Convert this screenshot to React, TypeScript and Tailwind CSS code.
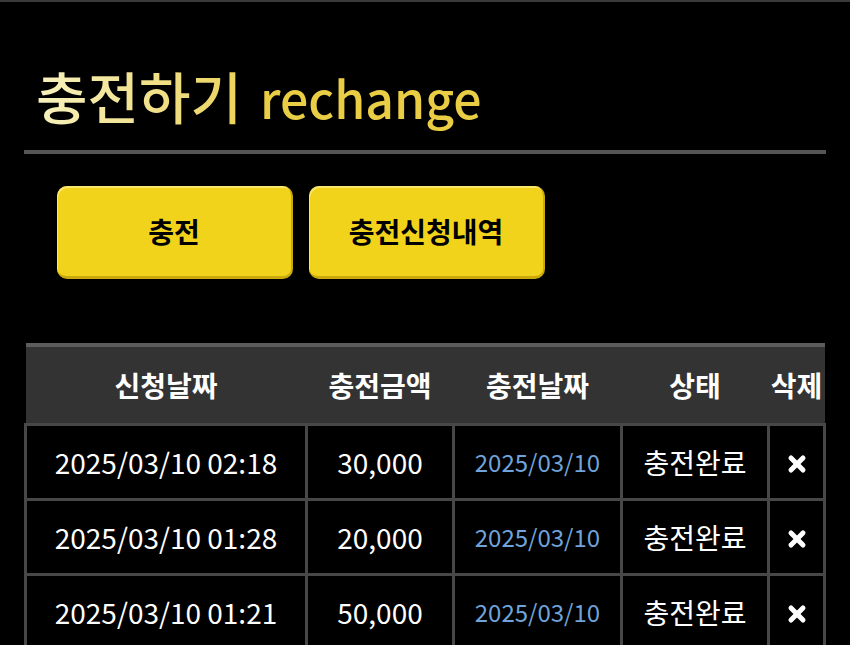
import { X } from "lucide-react";

type ChargeRow = {
  requestedAt: string;
  amount: string;
  chargedOn: string;
  status: string;
};

const rows: ChargeRow[] = [
  { requestedAt: "2025/03/10 02:18", amount: "30,000", chargedOn: "2025/03/10", status: "충전완료" },
  { requestedAt: "2025/03/10 01:28", amount: "20,000", chargedOn: "2025/03/10", status: "충전완료" },
  { requestedAt: "2025/03/10 01:21", amount: "50,000", chargedOn: "2025/03/10", status: "충전완료" },
];

const font = { fontFamily: '"Noto Sans CJK KR", "Noto Sans", sans-serif' };

function YellowButton({ label }: { label: string }) {
  return (
    <button className="flex h-[93px] w-[236px] items-center justify-center rounded-[10px] border-b-[3px] border-r-[2px] border-[#c9a90c] bg-[#f1d31c] text-[28px] font-bold text-black shadow-[inset_1px_2px_0_rgba(255,240,140,0.7),0_2px_3px_rgba(0,0,0,0.6)]">
      {label}
    </button>
  );
}

const cell = "border-[3px] border-[#474747] text-center";

export default function App() {
  return (
    <div className="min-h-screen border-t-2 border-[#3a3a3a] bg-black px-6" style={font}>
      <h1 className="flex items-baseline gap-[18px] pl-[12px] pt-[59px] pb-[19px] leading-[67px]">
        <span className="bg-gradient-to-r from-[#f7f1bd] to-[#ecd35a] bg-clip-text text-[56px] font-medium text-transparent">
          충전하기
        </span>
        <span className="text-[50px] font-medium text-[#e9cd45]">rechange</span>
      </h1>
      <div className="h-[4px] bg-[#555]" />

      <div className="flex gap-4 pl-[33px] pt-[32px]">
        <YellowButton label="충전" />
        <YellowButton label="충전신청내역" />
      </div>

      <table className="mt-[64px] w-full border-collapse text-white">
        <thead>
          <tr className="border-t-[4px] border-[#5c5c5c] bg-[#333333] text-[28px]">
            <th className="h-[79px] w-[281px] font-bold">신청날짜</th>
            <th className="w-[147px] font-bold">충전금액</th>
            <th className="w-[168px] font-bold">충전날짜</th>
            <th className="w-[147px] font-bold">상태</th>
            <th className="font-bold">삭제</th>
          </tr>
        </thead>
        <tbody>
          {rows.map((row) => (
            <tr key={row.requestedAt} className="text-[28px]">
              <td className={`h-[75px] ${cell}`}>{row.requestedAt}</td>
              <td className={cell}>{row.amount}</td>
              <td className={`${cell} text-[24px] text-[#6fa3da]`}>{row.chargedOn}</td>
              <td className={cell}>{row.status}</td>
              <td className={cell}>
                <X className="mx-auto mt-1 h-6 w-6" strokeWidth={5} />
              </td>
            </tr>
          ))}
        </tbody>
      </table>
    </div>
  );
}
